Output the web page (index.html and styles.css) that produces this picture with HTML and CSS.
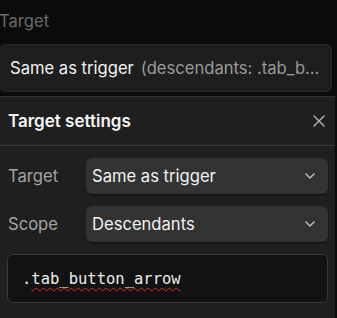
FILE: index.html
```html
<!DOCTYPE html>
<html>
<head>
<meta charset="utf-8">
<link rel="stylesheet" href="styles.css">
</head>
<body>
<div class="page">
  <div class="section-label">Target</div>
  <div class="summary">
    <span class="summary-main">Same as trigger</span>
    <span class="summary-sub">(descendants: .tab_b...</span>
  </div>
  <div class="panel">
    <div class="panel-header">
      <span class="panel-title">Target settings</span>
      <svg class="close" width="14" height="14" viewBox="0 0 14 14"><path d="M2 2L12 12M12 2L2 12" stroke="#b5b5b5" stroke-width="1.4" stroke-linecap="round"/></svg>
    </div>
    <div class="panel-body">
      <div class="row">
        <span class="row-label">Target</span>
        <div class="select"><span>Same as trigger</span><svg width="12" height="8" viewBox="0 0 12 8"><path d="M2 2L6 6L10 2" fill="none" stroke="#bdbdbd" stroke-width="1.5" stroke-linecap="round" stroke-linejoin="round"/></svg></div>
      </div>
      <div class="row">
        <span class="row-label">Scope</span>
        <div class="select"><span>Descendants</span><svg width="12" height="8" viewBox="0 0 12 8"><path d="M2 2L6 6L10 2" fill="none" stroke="#bdbdbd" stroke-width="1.5" stroke-linecap="round" stroke-linejoin="round"/></svg></div>
      </div>
      <div class="input"><span class="code">.<span class="typo">tab_button_arrow</span></span></div>
    </div>
  </div>
</div>
</body>
</html>
```
FILE: styles.css
```css
html, body {
  margin: 0;
  padding: 0;
  background: #0b0b0b;
}
.page {
  width: 337px;
  height: 318px;
  overflow: hidden;
  font-family: Inter, "Noto Sans", sans-serif;
  font-size: 16.6px;
  display: flex;
  flex-direction: column;
}
.section-label {
  color: #6a6a6a;
  height: 40px;
  line-height: 42px;
  margin-left: -1px;
  margin-bottom: 4px;
}
.summary {
  margin-left: -1px;
  background: #1e1e1e;
  border: 1px solid #262626;
  border-radius: 6px;
  display: flex;
  align-items: center;
  padding-left: 10px;
  box-sizing: border-box;
  width: 333px;
  height: 48px;
  white-space: nowrap;
  overflow: hidden;
}
.summary-main {
  color: #f2f2f2;
}
.summary-sub {
  color: #9a9a9a;
  margin-left: 7px;
}
.panel {
  margin-top: 4px;
  width: 335px;
  background: #1f1f1f;
  border-top: 1px solid #333;
  flex: 1;
}
.panel-header {
  height: 48px;
  border-bottom: 1px solid #3a3a3a;
  display: flex;
  align-items: center;
  justify-content: space-between;
  padding: 0 8px 0 8px;
}
.panel-title {
  color: #f5f5f5;
  font-weight: 600;
  font-size: 17px;
}
.close {
  margin-right: 1px;
}
.panel-body {
  padding: 12px 7px 0 7px;
  display: flex;
  flex-direction: column;
  gap: 12px;
}
.row {
  display: flex;
  align-items: center;
  height: 36px;
}
.row-label {
  color: #a3a3a3;
  width: 78px;
  padding-left: 1px;
}
.select {
  flex: 1;
  height: 36px;
  background: #333333;
  border-radius: 6px;
  box-shadow: 0 1px 2px rgba(0,0,0,0.5);
  display: flex;
  align-items: center;
  justify-content: space-between;
  padding: 0 12px 0 6px;
  color: #f2f2f2;
}
.input {
  height: 49px;
  box-sizing: border-box;
  background: #121212;
  border: 1px solid #3a3a3a;
  border-radius: 6px;
  display: flex;
  align-items: center;
  padding-left: 14px;
}
.code {
  font-family: "DejaVu Sans Mono", monospace;
  font-size: 15.5px;
  color: #ededed;
}
.typo {
  text-decoration: underline wavy #e0302a;
  text-decoration-thickness: 1px;
  text-underline-offset: 3px;
}
```
